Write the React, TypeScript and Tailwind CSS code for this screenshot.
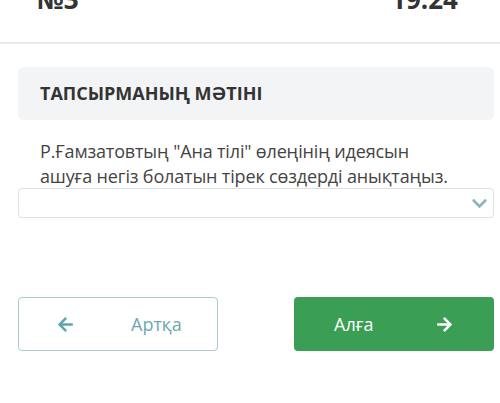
import { FaArrowLeft, FaArrowRight, FaChevronDown } from "react-icons/fa"

export default function App() {
  return (
    <div className="w-[500px] h-[403px] bg-white overflow-hidden font-['Open_Sans',sans-serif]">
      {/* top bar, cut off by the screenshot */}
      <div className="h-[44px] border-b-2 border-[#e8e8e8] relative overflow-hidden">
        <div className="flex justify-between items-end px-[37px] mt-[-22px] h-[34px] text-[26px] font-bold text-[#333]">
          <span className="leading-none">№3</span>
          <span className="leading-none mr-[5px]">19:24</span>
        </div>
      </div>

      <div className="px-[18px] pr-[6px]">
        <div className="mt-[23px] h-[53px] bg-[#f3f4f6] rounded-[6px] flex items-center px-[22px]">
          <h2 className="text-[18px] font-bold text-[#333]">ТАПСЫРМАНЫҢ МӘТІНІ</h2>
        </div>

        <p className="mt-[19px] pl-[22px] text-[18px] leading-[25px] tracking-[-0.15px] text-[#444]">
          Р.Ғамзатовтың "Ана тілі" өлеңінің идеясын
          <br />
          ашуға негіз болатын тірек сөздерді анықтаңыз.
        </p>

        <div className="mt-[-1px] h-[30px] border border-[#dcdfe3] rounded-[4px] flex items-center justify-end pr-[5px]">
          <FaChevronDown className="text-[#8fb3bb]" size={17} />
        </div>

        <div className="mt-[79px] flex justify-between">
          <button className="w-[200px] h-[54px] border border-[#a9cbcf] rounded-[4px] bg-white flex items-center pl-[38px] text-[#6aa9b1]">
            <FaArrowLeft size={17} className="text-[#5ca6ad]" />
            <span className="ml-[57px] text-[18px]">Артқа</span>
          </button>
          <button className="w-[200px] h-[54px] rounded-[4px] bg-[#3a9e55] flex items-center pl-[40px] text-white">
            <span className="text-[18px]">Алға</span>
            <FaArrowRight size={17} className="ml-[63px]" />
          </button>
        </div>
      </div>
    </div>
  )
}
